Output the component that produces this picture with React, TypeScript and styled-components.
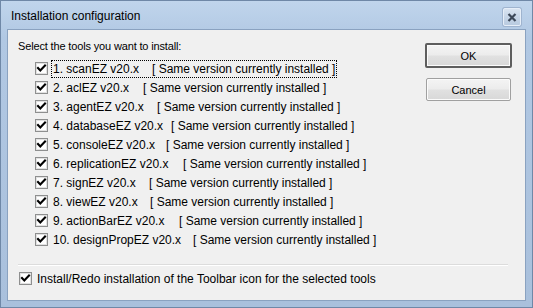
import React from 'react'
import styled, { createGlobalStyle } from 'styled-components'

const GlobalStyle = createGlobalStyle`
  html, body {
    margin: 0;
    padding: 0;
    background: #ffffff;
  }
  * {
    box-sizing: border-box;
  }
`

type Tool = {
  name: string
  bracketX: number
}

// x (in page pixels) where the "[ Same version ... ]" part of each row starts
const TOOLS: Tool[] = [
  { name: '1. scanEZ v20.x', bracketX: 152 },
  { name: '2. aclEZ v20.x', bracketX: 143 },
  { name: '3. agentEZ v20.x', bracketX: 157 },
  { name: '4. databaseEZ v20.x', bracketX: 171 },
  { name: '5. consoleEZ v20.x', bracketX: 166 },
  { name: '6. replicationEZ v20.x', bracketX: 183 },
  { name: '7. signEZ v20.x', bracketX: 149 },
  { name: '8. viewEZ v20.x', bracketX: 150 },
  { name: '9. actionBarEZ v20.x', bracketX: 179 },
  { name: '10. designPropEZ v20.x', bracketX: 193 },
]

const LABEL_LEFT = 53

const CheckMark = () => (
  <svg width={11} height={11} viewBox="0 0 11 11">
    <path d="M2 5 L4.3 7.4 L9 2.5" fill="none" stroke="#000" strokeWidth={2.1} strokeLinecap="square" />
  </svg>
)

const CloseGlyph = () => (
  <svg width={10} height={9} viewBox="0 0 10 9">
    <path d="M1.5 1 L8.5 8 M8.5 1 L1.5 8" fill="none" stroke="#3c4859" strokeWidth={2.2} />
  </svg>
)

const App: React.FC = () => {
  return (
    <>
      <GlobalStyle />
      <Window>
        <TitleBar>
          <TitleText>Installation configuration</TitleText>
          <CloseButton>
            <CloseGlyph />
          </CloseButton>
        </TitleBar>
        <Client>
          <TopSection>
            <ToolsPane>
              <Heading>Select the tools you want to install:</Heading>
              <ToolList>
                {TOOLS.map((tool, index) => (
                  <ToolRow key={`tool_${index}`}>
                    <CheckBox>
                      <CheckMark />
                    </CheckBox>
                    <ToolLabel focused={index === 0}>
                      <ToolName style={{ width: tool.bracketX - LABEL_LEFT }}>{tool.name}</ToolName>
                      <span>[ Same version currently installed ]</span>
                    </ToolLabel>
                  </ToolRow>
                ))}
              </ToolList>
            </ToolsPane>
            <ButtonColumn>
              <DialogButton isDefault>OK</DialogButton>
              <DialogButton>Cancel</DialogButton>
            </ButtonColumn>
          </TopSection>
          <Separator />
          <BottomRow>
            <CheckBox>
              <CheckMark />
            </CheckBox>
            <BottomLabel>Install/Redo installation of the Toolbar icon for the selected tools</BottomLabel>
          </BottomRow>
        </Client>
      </Window>
    </>
  )
}

const Window = styled.div`
  width: 533px;
  height: 308px;
  display: flex;
  flex-direction: column;
  border: 1px solid #6f88a7;
  padding: 0 6px 6px 6px;
  background: linear-gradient(180deg, #c0d5ec 0%, #b1c8e3 12%, #a9c0dc 100%);
  font-family: 'Liberation Sans', Arial, sans-serif;
`

const TitleBar = styled.div`
  height: 28px;
  flex-shrink: 0;
  display: flex;
  align-items: flex-start;
  justify-content: space-between;
  padding: 0 5px 0 4px;
`

const TitleText = styled.span`
  font-size: 12px;
  line-height: 14px;
  margin-top: 8px;
  color: #000;
`

const CloseButton = styled.div`
  width: 18px;
  height: 18px;
  margin-top: 7px;
  display: flex;
  align-items: center;
  justify-content: center;
  border: 1px solid #e6eef8;
  border-radius: 2px;
  background: linear-gradient(180deg, #d9e4f1 0%, #c6d5e7 50%, #b9cbe0 100%);
  box-shadow: 0 0 0 1px #9fb4cf;
`

const Client = styled.div`
  flex: 1;
  display: flex;
  flex-direction: column;
  background: #f0f0f0;
  border: 1px solid #8aa2c0;
  font-size: 12px;
  color: #000;
`

const TopSection = styled.div`
  height: 229px;
  display: flex;
`

const ToolsPane = styled.div`
  flex: 1;
  padding: 10px 0 0 10px;
`

const Heading = styled.div`
  height: 13px;
  font-size: 11px;
  line-height: 13px;
  letter-spacing: -0.15px;
`

const ToolList = styled.div`
  margin-top: 6px;
  padding-left: 17px;
  display: flex;
  flex-direction: column;
`

const ToolRow = styled.div`
  height: 19px;
  display: flex;
  align-items: center;
`

const CheckBox = styled.div`
  width: 13px;
  height: 13px;
  flex-shrink: 0;
  display: flex;
  align-items: center;
  justify-content: center;
  border: 1px solid #8e8f8f;
  background: #ffffff;
  box-shadow: inset 0 0 0 1px #e2e2e2;
`

const ToolLabel = styled.div<{ focused?: boolean }>`
  display: flex;
  align-items: center;
  height: 18px;
  margin-left: 3px;
  padding: 0 2px;
  line-height: 14px;
  white-space: pre;
  outline: ${(props) => (props.focused ? '1px dotted #000' : 'none')};
  outline-offset: -1px;
`

const ToolName = styled.span`
  flex-shrink: 0;
`

const ButtonColumn = styled.div`
  width: 87px;
  margin-right: 13px;
  padding-top: 13px;
  display: flex;
  flex-direction: column;
  align-items: center;
  gap: 10px;
`

const DialogButton = styled.button<{ isDefault?: boolean }>`
  width: ${(props) => (props.isDefault ? '87px' : '85px')};
  height: ${(props) => (props.isDefault ? '25px' : '23px')};
  padding: 0;
  font-family: 'Liberation Sans', Arial, sans-serif;
  font-size: 11px;
  color: #000;
  border: ${(props) => (props.isDefault ? '2px solid #5e5e5e' : '1px solid #a0a0a0')};
  border-radius: 2px;
  background: linear-gradient(180deg, #f4f4f4 0%, #ececec 48%, #e1e1e1 52%, #d8d8d8 100%);
  box-shadow: inset 0 0 0 1px #fbfbfb;
`

const Separator = styled.div`
  height: 2px;
  margin: 5px 17px 0 10px;
  border-top: 1px solid #dcdcdc;
  border-bottom: 1px solid #ffffff;
`

const BottomRow = styled.div`
  display: flex;
  align-items: center;
  height: 19px;
  margin-top: 3px;
  padding-left: 11px;
`

const BottomLabel = styled.span`
  margin-left: 5px;
  line-height: 14px;
`

export default App
